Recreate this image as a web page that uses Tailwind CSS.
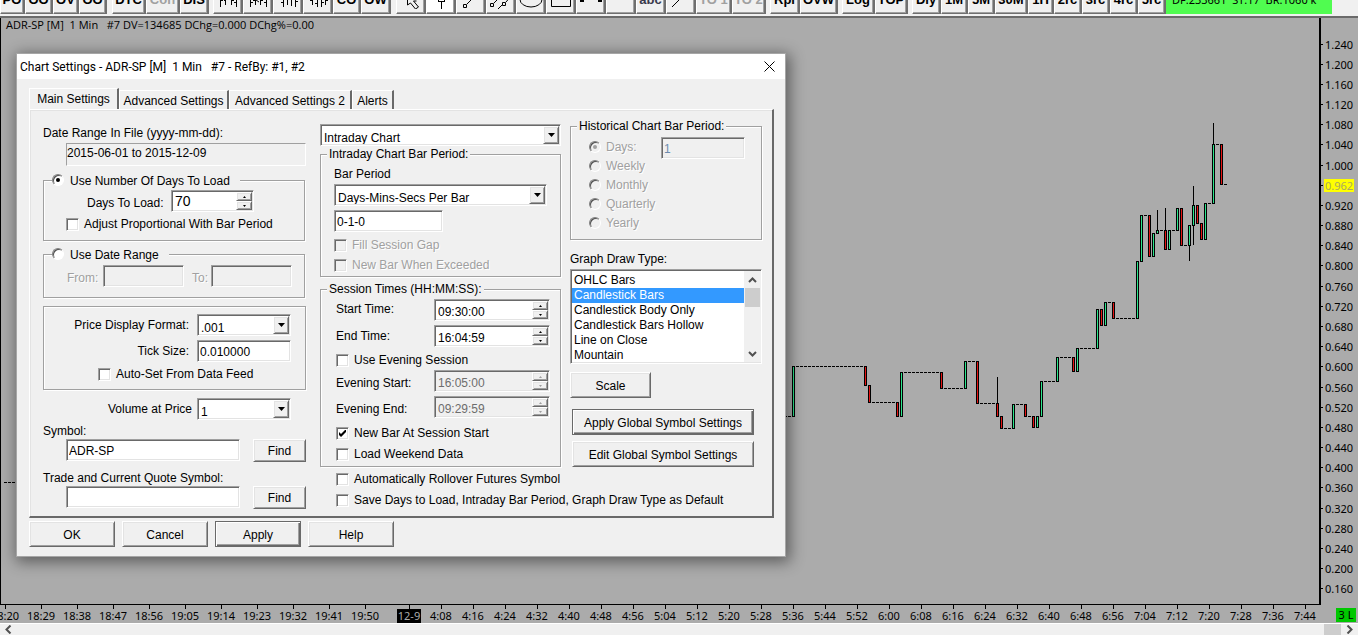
<!DOCTYPE html>
<html lang="en">
<head>
<meta charset="utf-8">
<title>Chart Settings</title>
<script src="https://cdn.jsdelivr.net/npm/@tailwindcss/browser@4"></script>
</head>
<body class="flex h-screen flex-col overflow-hidden bg-[#ababab] text-black">

<!-- Toolbar, scrolled so that only its lower edge shows -->
<header class="flex h-[18px] shrink-0 items-end overflow-hidden border-b-2 border-[#6a6a6a] bg-[#f0f0f0] pb-0.5 font-['Liberation_Sans',sans-serif] text-[13px] font-bold [&_button]:flex [&_button]:h-7 [&_button]:shrink-0 [&_button]:items-center [&_button]:justify-center [&_button]:border-y [&_button]:border-r-2 [&_button]:border-l [&_button]:[border-color:#fff_#6f6f6f_#6f6f6f_#fff] [&_button]:shadow-[inset_-1px_-1px_0_#a0a0a0] [&_svg]:mb-1.5 [&_svg]:fill-none [&_svg]:stroke-black">
  <nav class="flex items-end gap-1">
    <div class="mr-px flex">
      <button class="w-[25px]">PO</button><button class="w-7">OO</button><button class="w-[26px]">OV</button><button class="w-7">OO</button>
    </div>
    <div class="flex">
      <button class="w-[34px]">DTC</button><button class="w-[34px] text-[#a0a0a0]">Con</button><button class="w-[29px]">DIS</button>
    </div>
    <div class="mr-px flex">
      <button class="w-[30px]" aria-label="Bars 1"><svg width="24" height="24" viewBox="0 0 24 24"><path d="M4.500 22V10M4 15.500h3M9.500 20V10M8 15.500h2M15.500 20v-8M15 15.500h3M20.500 22V14M18 17.500h3"/></svg></button>
      <button class="w-[30px]" aria-label="Bars 2"><svg width="24" height="24" viewBox="0 0 24 24"><path d="M4.500 22V10M4 17.500h3M9.500 20V10M7 15.500h3M14.500 20v-8M14 15.500h3M20.500 22V14M18 17.500h3M10 15l3 2"/></svg></button>
      <button class="w-[30px]" aria-label="Bars 3"><svg width="24" height="24" viewBox="0 0 24 24"><path d="M7.500 22V10M5 17.500h3M11.500 20V10M9 14.500h3M15.500 21v-8M15 14.500h3M19.500 22V12M19 16.500h3"/></svg></button>
      <button class="w-[30px]" aria-label="Bars 4"><svg width="24" height="24" viewBox="0 0 24 24"><path d="M6.500 20V10M4 15.500h3M11.500 22V10M9 18.500h3M15.500 22v-8M15 17.500h3M19.500 20V12M19 15.500h3"/></svg></button>
      <button class="w-7">CO</button><button class="w-[30px]">OW</button>
    </div>
    <div class="flex">
      <button class="w-[30px]" aria-label="Pointer"><svg width="24" height="24" viewBox="0 0 24 24"><path d="M8.500 12v8l3-2 5 6 3-2-5-6h3"/></svg></button>
      <button class="w-[30px] bg-white" aria-label="Crosshair"><svg width="24" height="24" viewBox="0 0 24 24"><path d="M12.500 24v-7M9.500 16.500v-4M15.500 16.500v-4M9 16.500h7"/></svg></button>
      <button class="w-[30px]" aria-label="Trend line"><svg width="24" height="24" viewBox="0 0 24 24"><path d="M4.500 19.500h3v3h-3zM8 19l9-9"/></svg></button>
      <button class="w-[30px]" aria-label="Channel"><svg width="24" height="24" viewBox="0 0 24 24"><path d="M1.500 18.500h3v3h-3zM13.500 17.500h3v3h-3zM5 18l8-8M13 20l-5 5M17 17l6-7"/></svg></button>
      <button class="w-[30px]" aria-label="Ellipse"><svg width="24" height="24" viewBox="0 0 24 24"><ellipse cx="12" cy="14.500" rx="11" ry="7.500"/></svg></button>
      <button class="w-[30px]" aria-label="Rectangle"><svg width="24" height="24" viewBox="0 0 24 24"><path d="M2.500 5v16.500h19V5"/></svg></button>
      <button class="w-[30px]" aria-label="Level"><svg width="24" height="24" viewBox="0 0 24 24"><path stroke-width="2" d="M1 16h4M19 16h4"/></svg></button>
      <button class="w-[30px]" aria-label="Blank"></button>
      <button class="w-[30px] text-[#3a3a4c]">abc</button>
      <button class="w-[30px]" aria-label="Ray"><svg width="24" height="24" viewBox="0 0 24 24"><path d="M3 22L16 9"/></svg></button>
      <button class="w-9 text-[#a0a0a0]">TO 1</button><button class="w-[34px] text-[#a0a0a0]">TO 2</button>
    </div>
    <div class="flex">
      <button class="w-[30px]">Rpl</button><button class="w-[38px]">OVW</button>
    </div>
    <div class="flex">
      <button class="w-[33px]">Log</button><button class="w-[33px]">TOP</button>
    </div>
    <div class="flex">
      <button class="w-[29px]">Dly</button><button class="w-[27px]">1M</button><button class="w-[27px]">5M</button><button class="w-[33px]">30M</button><button class="w-[26px]">1H</button><button class="w-7">2rc</button><button class="w-7">3rc</button><button class="w-7">4rc</button><button class="w-7">5rc</button>
      <p class="flex h-7 w-[166px] items-center bg-[#50fc50] pl-1.5 font-['Noto_Sans',sans-serif] text-[11px] font-normal whitespace-pre">DF:233661  ST:17  BR:1060 k</p>
    </div>
  </nav>
</header>

<!-- Chart -->
<main class="flex min-h-0 flex-1 font-['Noto_Sans',sans-serif] text-[11px]">
  <section class="relative min-w-0 flex-1 overflow-hidden border-r-2 border-b border-l border-black" aria-label="Price chart">
    <h1 class="absolute top-0 left-[5px] h-4 font-['Open_Sans',sans-serif] leading-[14px] whitespace-pre">ADR-SP [M]  1 Min   #7 DV=134685 DChg=0.000 DChg%=0.00</h1>
    <svg id="plot" width="1320" height="587" viewBox="1 18 1320 587" shape-rendering="crispEdges"></svg>
  </section>
  <ol id="prices" class="flex w-[37px] shrink-0 flex-col pt-4 pb-1.5"></ol>
</main>

<!-- Time axis -->
<footer class="shrink-0 font-['Noto_Sans',sans-serif] text-[11px]">
  <div class="flex h-[18px] items-start overflow-hidden">
    <ol id="times" class="-ml-[13px] flex min-w-0 flex-1"></ol>
    <span class="mt-[3px] mr-0.5 h-[14px] w-5 bg-[#00c800] text-center leading-[14px]">3 L</span>
  </div>
  <div class="flex h-3 items-center overflow-hidden border-t border-white bg-[#f0f0f0]">
    <button aria-label="Scroll left" class="flex w-[17px] justify-center"><svg width="7" height="9" class="fill-none stroke-[#505050] stroke-2"><path d="M5.500 .5L1.500 4.500l4 4"/></svg></button>
    <span class="flex-1"></span>
    <span class="h-3 w-[17px] bg-[#cdcdcd]"></span>
    <button aria-label="Scroll right" class="flex w-[17px] justify-center"><svg width="7" height="9" class="fill-none stroke-[#505050] stroke-2"><path d="M1.500 .5l4 4-4 4"/></svg></button>
  </div>
</footer>

<!-- Settings window -->
<form role="dialog" aria-labelledby="title" onsubmit="return false" class="absolute top-[53px] left-4 w-[770px] border border-[#a6a6a6] bg-[#f0f0f0] font-['Liberation_Sans',sans-serif] text-xs leading-4 shadow-[2px_3px_14px_2px_rgb(0_0_0/0.45)]
 [&_.sunk]:border [&_.sunk]:[border-color:#a0a0a0_#fff_#fff_#a0a0a0] [&_.sunk]:shadow-[inset_1px_1px_0_#696969,inset_-1px_-1px_0_#e3e3e3]
 [&_.raised]:border [&_.raised]:[border-color:#fff_#696969_#696969_#fff] [&_.raised]:shadow-[inset_1px_1px_0_#e3e3e3,inset_-1px_-1px_0_#a0a0a0]
 [&_.default]:border [&_.default]:border-[#696969] [&_.default]:shadow-[inset_1px_1px_0_#fff,inset_-1px_-1px_0_#696969,inset_-2px_-2px_0_#a0a0a0]
 [&_.group]:min-w-0 [&_.group]:border [&_.group]:border-[#a0a0a0] [&_.group]:shadow-[1px_1px_0_#fff,inset_1px_1px_0_#fff]
 [&_legend]:h-4 [&_legend]:bg-[#f0f0f0]
 [&_.off]:text-[#a0a0a0] [&_.off]:[text-shadow:1px_1px_0_#fff]
 [&_.field]:h-[22px] [&_.field]:pt-0.5 [&_.field]:pl-[2px] [&_.field]:outline-none
 [&_.box]:size-[13px] [&_.box]:shrink-0 [&_.box]:appearance-none
 [&_.dot]:size-3 [&_.dot]:shrink-0 [&_.dot]:appearance-none [&_.dot]:rounded-full [&_.dot]:border [&_.dot]:[border-color:#808080_#fff_#fff_#808080] [&_.dot]:shadow-[inset_1px_1px_0_#505050]
 [&_.check]:flex [&_.check]:h-4 [&_.check]:items-center [&_.check]:gap-[5px]
 [&_.drop]:flex [&_.drop]:h-[22px] [&_.drop]:bg-white [&_.drop]:p-px [&_.drop>select]:min-w-0 [&_.drop>select]:flex-1 [&_.drop>select]:appearance-none [&_.drop>select]:pl-[2px] [&_.drop>select]:pt-1 [&_.drop>span]:flex [&_.drop>span]:w-4 [&_.drop>span]:items-center [&_.drop>span]:justify-center [&_.drop>span]:bg-[#f0f0f0]
 [&_.spin]:flex [&_.spin]:h-[22px] [&_.spin]:p-px [&_.spin>input]:min-w-0 [&_.spin>input]:flex-1 [&_.spin>input]:pl-[2px] [&_.spin>input]:outline-none [&_.spin>span]:flex [&_.spin>span]:w-4 [&_.spin>span]:flex-col [&_.spin>span]:bg-[#f0f0f0] [&_.spin_button]:flex [&_.spin_button]:flex-1 [&_.spin_button]:items-center [&_.spin_button]:justify-center">

  <div class="flex h-[25px] items-center justify-between bg-white pr-2.5 pl-[3px]">
    <h2 id="title" class="font-['Roboto',sans-serif] text-xs whitespace-pre">Chart Settings - ADR-SP [M]  1 Min   #7 - RefBy: #1, #2</h2>
    <button type="button" aria-label="Close"><svg width="11" height="11" class="stroke-black"><path d="M.5 .5l10 10M10.500 .5l-10 10"/></svg></button>
  </div>

  <div class="pt-[9px] pr-[11px] pb-[9px] pl-3">
    <div role="tablist" class="flex h-[21px] items-end [&>button]:border-t [&>button]:border-r-2 [&>button]:border-l [&>button]:[border-color:#fff_#696969_#f0f0f0_#fff]">
      <button type="button" role="tab" aria-selected="true" class="h-[21px] w-[90px]">Main Settings</button>
      <button type="button" role="tab" class="h-[19px] w-[110px] pt-px">Advanced Settings</button>
      <button type="button" role="tab" class="h-[19px] w-[123px] pt-px">Advanced Settings 2</button>
      <button type="button" role="tab" class="h-[19px] w-[42px] pt-px">Alerts</button>
    </div>

    <div class="flex border-t border-r-2 border-b-2 border-l [border-color:#fff_#696969_#696969_#fff] pr-1.5 pb-[7px] pl-[13px] shadow-[inset_1px_1px_0_#e3e3e3]">
      <!-- Left column -->
      <div class="w-[263px] shrink-0 pt-[15px]">
        <label for="range" class="block">Date Range In File (yyyy-mm-dd):</label>
        <input id="range" readonly value="2015-06-01 to 2015-12-09" class="mt-0.5 ml-[23px] block h-[23px] w-60 border [border-color:#a0a0a0_#fff_#fff_#a0a0a0] pb-1 outline-none">

        <fieldset class="group mt-1.5 mr-px pb-2">
          <legend class="ml-2 pr-2.5"><label class="flex h-4 items-center gap-1.5"><span class="relative flex"><input type="radio" name="load" checked class="dot bg-white"><i class="absolute top-1 left-1 size-1 rounded-full bg-black"></i></span><span class="pt-0.5">Use Number Of Days To Load</span></label></legend>
          <div class="flex items-center pt-0.5 pl-[43px]">
            <label for="days" class="w-[84px] pt-1">Days To Load:</label>
            <div class="spin sunk w-[83px] bg-white"><input id="days" value="70" class="text-sm"><span><button type="button" aria-label="More" class="raised"><svg width="3" height="2"><path d="M0 2h3L1.500 0z"/></svg></button><button type="button" aria-label="Fewer" class="raised"><svg width="3" height="2"><path d="M0 0h3L1.500 2z"/></svg></button></span></div>
          </div>
          <label class="check mt-1 ml-[22px]"><input type="checkbox" class="box sunk bg-white">Adjust Proportional With Bar Period</label>
        </fieldset>

        <fieldset class="group mt-[5px] mr-px pb-2.5">
          <legend class="ml-2 pr-2.5"><label class="flex h-4 items-center gap-1.5"><input type="radio" name="load" class="dot bg-white"><span class="pt-0.5">Use Date Range</span></label></legend>
          <div class="off flex items-center pt-[3px] pl-[23px]">
            <label for="from" class="w-9 pt-1">From:</label><input id="from" disabled class="field sunk w-[81px]">
            <label for="to" class="ml-2 w-[19px] pt-1">To:</label><input id="to" disabled class="field sunk w-[81px]">
          </div>
        </fieldset>

        <div class="group mt-2 pt-[7px] pb-[7px]">
          <div class="flex items-center justify-end gap-2 pr-3.5">
            <label for="format">Price Display Format:</label>
            <div class="drop sunk w-[94px]"><select id="format"><option>.001</option></select><span class="raised"><svg width="7" height="4"><path d="M0 0h7L3.500 4z"/></svg></span></div>
          </div>
          <div class="mt-1 flex items-center justify-end gap-2 pr-3.5">
            <label for="tick">Tick Size:</label>
            <input id="tick" value="0.010000" class="field sunk w-[94px] bg-white">
          </div>
          <label class="check mt-1 ml-[54px]"><input type="checkbox" class="box sunk bg-white">Auto-Set From Data Feed</label>
        </div>

        <div class="mt-2 flex items-center justify-end gap-[5px] pr-[15px]">
          <label for="vap">Volume at Price</label>
          <div class="drop sunk w-[94px]"><select id="vap"><option>1</option></select><span class="raised"><svg width="7" height="4"><path d="M0 0h7L3.500 4z"/></svg></span></div>
        </div>

        <label for="symbol" class="mt-[3px] block">Symbol:</label>
        <div class="flex h-[23px] pl-[23px]">
          <input id="symbol" value="ADR-SP" class="field sunk w-[174px] bg-white">
          <button type="button" class="raised ml-[13px] flex-1">Find</button>
        </div>
        <label for="trade" class="mt-2 block">Trade and Current Quote Symbol:</label>
        <div class="flex h-[23px] pl-[23px]">
          <input id="trade" class="field sunk w-[174px] bg-white">
          <button type="button" class="raised ml-[13px] flex-1">Find</button>
        </div>
      </div>

      <div class="ml-3.5 flex-1">
        <div class="flex gap-[9px]">
          <!-- Middle column -->
          <div class="w-[241px] shrink-0 pt-3.5">
            <div class="drop sunk"><select aria-label="Chart kind"><option>Intraday Chart</option></select><span class="raised"><svg width="7" height="4"><path d="M0 0h7L3.500 4z"/></svg></span></div>
            <fieldset class="group pb-[3px] pl-[13px]">
              <legend class="-ml-[7px] px-0.5">Intraday Chart Bar Period:</legend>
              <label for="period" class="mt-1 block">Bar Period</label>
              <div class="drop sunk mt-0.5 w-[213px]"><select id="period"><option>Days-Mins-Secs Per Bar</option></select><span class="raised"><svg width="7" height="4"><path d="M0 0h7L3.500 4z"/></svg></span></div>
              <input aria-label="Bar length" value="0-1-0" class="field sunk mt-1 block w-[109px] bg-white">
              <label class="check off mt-[5px]"><input type="checkbox" disabled class="box sunk">Fill Session Gap</label>
              <label class="check off mt-1"><input type="checkbox" disabled class="box sunk">New Bar When Exceeded</label>
            </fieldset>

            <fieldset class="group mt-1 pr-2.5 pb-1 pl-[15px]">
              <legend class="-ml-[9px] px-0.5">Session Times (HH:MM:SS):</legend>
              <div class="flex justify-between pt-0.5">
                <label for="start" class="pt-0.5">Start Time:</label>
                <div class="spin sunk w-[116px] bg-white"><input id="start" value="09:30:00" class="pt-[3px]"><span><button type="button" aria-label="Later" class="raised"><svg width="3" height="2"><path d="M0 2h3L1.500 0z"/></svg></button><button type="button" aria-label="Earlier" class="raised"><svg width="3" height="2"><path d="M0 0h3L1.500 2z"/></svg></button></span></div>
              </div>
              <div class="mt-1 flex justify-between">
                <label for="end" class="pt-[3px]">End Time:</label>
                <div class="spin sunk w-[116px] bg-white"><input id="end" value="16:04:59" class="pt-[3px]"><span><button type="button" aria-label="Later" class="raised"><svg width="3" height="2"><path d="M0 2h3L1.500 0z"/></svg></button><button type="button" aria-label="Earlier" class="raised"><svg width="3" height="2"><path d="M0 0h3L1.500 2z"/></svg></button></span></div>
              </div>
              <label class="check mt-[5px]"><input type="checkbox" class="box sunk bg-white">Use Evening Session</label>
              <div class="mt-0.5 flex justify-between">
                <label for="estart" class="pt-[5px]">Evening Start:</label>
                <div class="spin sunk w-[116px]"><input id="estart" disabled value="16:05:00" class="pt-[3px] text-[#6d6d6d]"><span><button type="button" disabled aria-label="Later" class="raised"><svg width="3" height="2" class="fill-[#a0a0a0]"><path d="M0 2h3L1.500 0z"/></svg></button><button type="button" disabled aria-label="Earlier" class="raised"><svg width="3" height="2" class="fill-[#a0a0a0]"><path d="M0 0h3L1.500 2z"/></svg></button></span></div>
              </div>
              <div class="mt-1 flex justify-between">
                <label for="eend" class="pt-[5px]">Evening End:</label>
                <div class="spin sunk w-[116px]"><input id="eend" disabled value="09:29:59" class="pt-[3px] text-[#6d6d6d]"><span><button type="button" disabled aria-label="Later" class="raised"><svg width="3" height="2" class="fill-[#a0a0a0]"><path d="M0 2h3L1.500 0z"/></svg></button><button type="button" disabled aria-label="Earlier" class="raised"><svg width="3" height="2" class="fill-[#a0a0a0]"><path d="M0 0h3L1.500 2z"/></svg></button></span></div>
              </div>
              <label class="check mt-[7px]"><span class="relative flex"><input type="checkbox" checked class="box sunk bg-white"><svg width="7" height="7" class="pointer-events-none absolute top-[3px] left-[3px]"><path d="M0 2v3l2 2 5-5V-1L2 4z"/></svg></span>New Bar At Session Start</label>
              <label class="check mt-[5px]"><input type="checkbox" class="box sunk bg-white">Load Weekend Data</label>
            </fieldset>
          </div>

          <!-- Right column -->
          <div class="w-48 shrink-0 pt-2">
            <fieldset class="group pb-[7px] pl-[18px]">
              <legend class="-ml-3 px-0.5">Historical Chart Bar Period:</legend>
              <div class="flex pt-[3px]">
                <div class="off w-[72px] [&>label]:flex [&>label]:h-[19px] [&>label]:items-center [&>label]:gap-[5px]">
                  <label><span class="relative flex"><input type="radio" name="hist" disabled checked class="dot"><i class="absolute top-1 left-1 size-1 rounded-full bg-[#a0a0a0]"></i></span>Days:</label>
                  <label><input type="radio" name="hist" disabled class="dot">Weekly</label>
                  <label><input type="radio" name="hist" disabled class="dot">Monthly</label>
                  <label><input type="radio" name="hist" disabled class="dot">Quarterly</label>
                  <label><input type="radio" name="hist" disabled class="dot">Yearly</label>
                </div>
                <input aria-label="Number of days" disabled value="1" class="field sunk w-[84px] text-[#6d8cae]">
              </div>
            </fieldset>

            <label for="draw" class="mt-[11px] block">Graph Draw Type:</label>
            <div class="sunk mt-0.5 flex h-[95px] bg-white py-px pl-px">
              <select id="draw" size="6" class="h-[91px] flex-1 appearance-none overflow-hidden pt-0.5 outline-none [&>option]:h-[15px] [&>option]:min-h-0 [&>option]:py-0 [&>option]:pl-[2px] [&>option]:leading-[15px]">
                <option>OHLC Bars</option>
                <option selected class="bg-[#3399ff] bg-linear-to-r from-[#3399ff] to-[#3399ff] checked:text-white">Candlestick Bars</option>
                <option>Candlestick Body Only</option>
                <option>Candlestick Bars Hollow</option>
                <option>Line on Close</option>
                <option>Mountain</option>
              </select>
              <div class="flex w-[17px] flex-col items-center bg-[#f0f0f0]">
                <button type="button" aria-label="Scroll up" class="flex h-[17px] items-center"><svg width="9" height="6" class="fill-none stroke-[#505050] stroke-2"><path d="M1 5l3.500-3.500L8 5"/></svg></button>
                <span class="h-[19px] w-[15px] bg-[#cdcdcd]"></span>
                <button type="button" aria-label="Scroll down" class="mt-auto flex h-[17px] items-center"><svg width="9" height="6" class="fill-none stroke-[#505050] stroke-2"><path d="M1 1l3.500 3.500L8 1"/></svg></button>
              </div>
            </div>
            <button type="button" class="raised mt-2 block h-[26px] w-[81px] pt-0.5">Scale</button>
            <button type="button" class="default mt-[11px] ml-0.5 block h-[26px] w-[182px] pt-0.5">Apply Global Symbol Settings</button>
            <button type="button" class="raised mt-1.5 ml-0.5 block h-[26px] w-[182px] pt-0.5">Edit Global Symbol Settings</button>
          </div>
        </div>
        <label class="check mt-1 ml-4"><input type="checkbox" class="box sunk bg-white">Automatically Rollover Futures Symbol</label>
        <label class="check mt-[5px] ml-4"><input type="checkbox" class="box sunk bg-white">Save Days to Load, Intraday Bar Period, Graph Draw Type as Default</label>
      </div>
    </div>

    <div class="mt-[3px] flex gap-[7px] [&>button]:h-[26px] [&>button]:w-[86px] [&>button]:pt-0.5">
      <button type="button" class="raised">OK</button>
      <button type="button" class="raised">Cancel</button>
      <button type="button" class="default">Apply</button>
      <button type="button" class="raised">Help</button>
    </div>
  </div>
</form>

<script>
  // Unchanged bars: [first x, last x, y]
  const flat = [[4,12,482],[784,788,416],[796,860,366],[872,892,402],[904,936,372],[944,960,388],[968,972,361],[980,992,403],[1004,1008,428],[1016,1020,404],[1028,1028,416],[1044,1052,381],[1060,1068,357],[1080,1092,348],[1108,1108,302],[1116,1132,318],[1144,1144,215],[1160,1160,230],[1172,1172,230],[1184,1184,245],[1208,1208,203],[1216,1216,144],[1224,1224,184]];
  // Candles: [x, top, bottom, rising, wick top, wick bottom]
  const bars = [[792,366,416,1],[864,366,385,0],[868,385,402,0],[896,402,416,0],[900,372,416,1],[940,372,388,0],[964,361,388,1],[976,361,403,0],[996,403,416,0,377],[1000,416,428,0],[1012,404,428,1],[1024,404,416,0],[1032,416,427,0],[1036,416,427,1],[1040,381,416,1],[1056,357,381,1],[1072,357,371,0],[1076,348,371,1],[1096,309,348,1],[1100,309,325,0],[1104,302,325,1],[1112,302,318,0],[1136,261,318,1],[1140,215,261,1],[1148,215,256,0],[1152,233,256,1],[1156,230,233,1,210],[1164,230,249,0,208],[1168,230,249,1],[1176,208,230,1],[1180,208,245,0],[1188,225,245,1,0,260],[1192,205,225,1,186,244],[1196,205,223,0],[1200,223,239,0],[1204,203,239,1],[1212,144,203,1,123],[1220,144,184,0]];
  let s = '';
  for (const [a, b, y] of flat) for (let x = a; x <= b; x += 4) s += `<rect x="${x}" y="${y}" width="3" height="1"/>`;
  for (const [x, t, b, up, wt, wb] of bars) {
    const hi = wt || t, lo = wb || b;
    s += `<rect x="${x + 1}" y="${hi}" width="1" height="${lo - hi + 1}"/><rect x="${x}" y="${t}" width="3" height="${b - t + 1}"/><rect x="${x + 1}" y="${t + 1}" width="1" height="${b - t - 1}" fill="${up ? '#2be68c' : '#e61414'}"/>`;
  }
  document.getElementById('plot').innerHTML = s;

  let p = '';
  for (let v = 1240; v >= 160; v -= 40) {
    const last = v === 960;
    p += `<li class="flex min-h-0 flex-1 items-center"><span class="h-px w-0.5 bg-black"></span><span class="${last ? 'ml-px bg-[#ffff00] px-px text-[#a8a860] leading-[13px]' : 'ml-0.5 leading-[13px]'}">${last ? '0.962' : (v / 1000).toFixed(3)}</span></li>`;
  }
  document.getElementById('prices').innerHTML = p;

  const cell = (t, c, l) => `<li class="${c}"><span class="h-1 w-px bg-black"></span><span class="${l}">${t}</span></li>`;
  const hm = m => Math.floor(m / 60) + ':' + String(m % 60).padStart(2, '0');
  let t = '';
  for (let m = 1100; m <= 1190; m += 9) t += cell(hm(m), 'flex w-9 shrink-0 flex-col items-center', 'leading-[14px]');
  t += cell('12-9', 'mr-1 ml-3.5 flex w-6 shrink-0 flex-col items-center', 'w-6 bg-black text-center leading-[14px] text-[#ababab]');
  for (let m = 248; m <= 464; m += 8) t += cell(hm(m), 'flex w-8 shrink-0 flex-col items-center', 'leading-[14px]');
  document.getElementById('times').innerHTML = t;
</script>
</body>
</html>
